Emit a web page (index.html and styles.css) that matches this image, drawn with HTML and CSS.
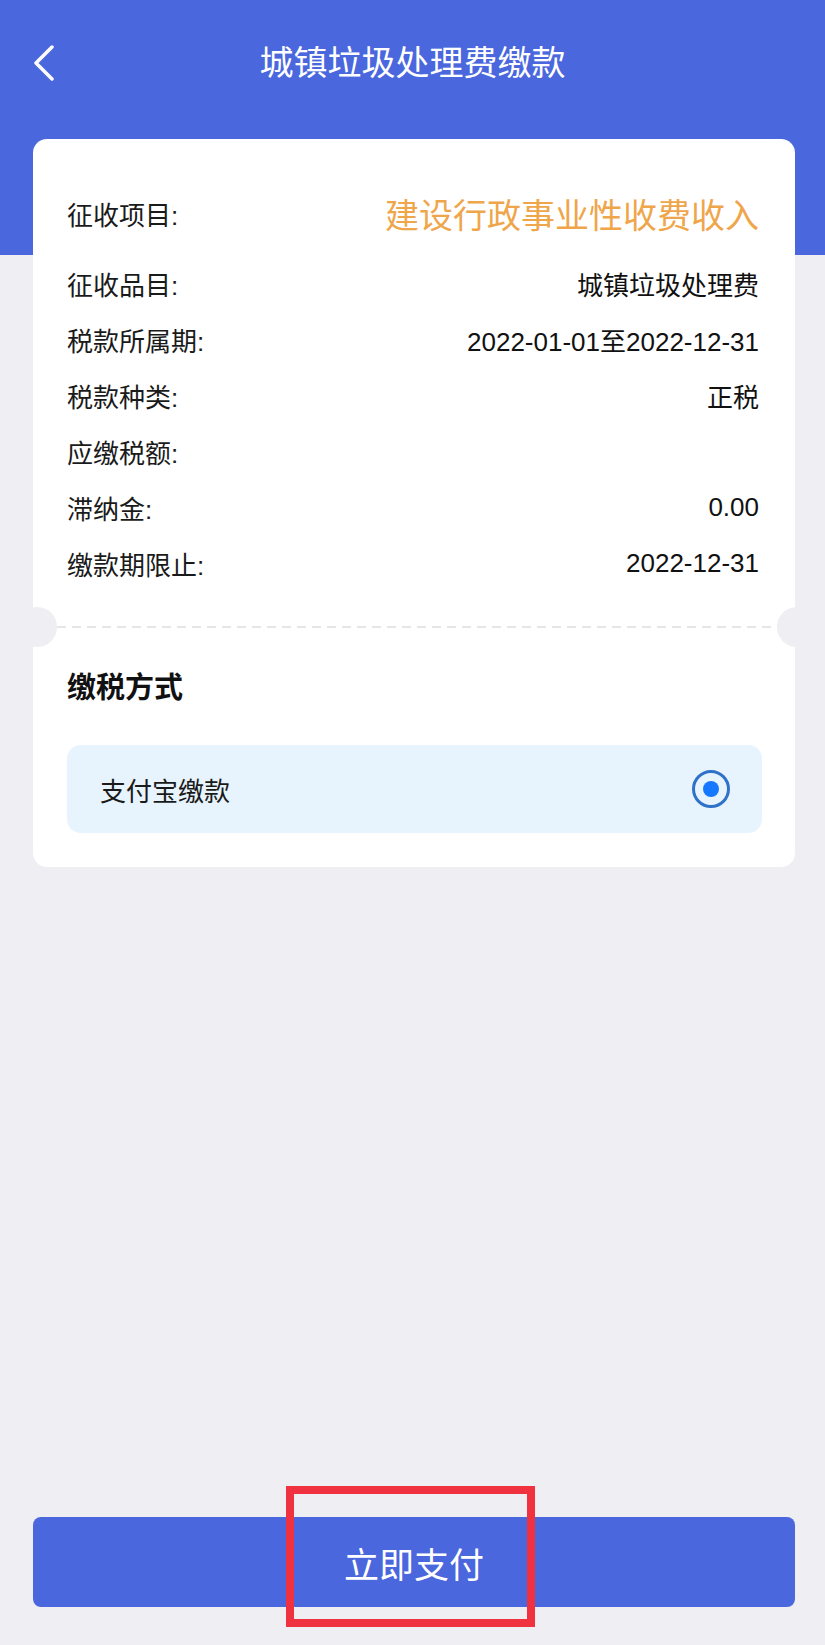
FILE: index.html
```html
<!DOCTYPE html>
<html lang="zh-CN">
<head>
    <meta charset="UTF-8">
    <meta name="viewport" content="width=device-width, initial-scale=1.0">
    <title>城镇垃圾处理费缴款</title>
    <link rel="stylesheet" href="styles.css">
</head>
<body>
<div class="page">

    <div class="nav">
        <a class="back" href="#">
            <svg width="22" height="36" viewBox="0 0 22 36">
                <polyline points="19,2 3,18 19,34" fill="none" stroke="#fff" stroke-width="3.5" stroke-linecap="round" stroke-linejoin="round"/>
            </svg>
        </a>
        <div class="nav-title">城镇垃圾处理费缴款</div>
        <div></div>
    </div>

    <div class="card">
        <div class="info">
            <div class="row row-main">
                <span class="label">征收项目:</span>
                <span class="value highlight-value">建设行政事业性收费收入</span>
            </div>
            <div class="row">
                <span class="label">征收品目:</span>
                <span class="value">城镇垃圾处理费</span>
            </div>
            <div class="row">
                <span class="label">税款所属期:</span>
                <span class="value">2022-01-01至2022-12-31</span>
            </div>
            <div class="row">
                <span class="label">税款种类:</span>
                <span class="value">正税</span>
            </div>
            <div class="row">
                <span class="label">应缴税额:</span>
                <span class="value"></span>
            </div>
            <div class="row">
                <span class="label">滞纳金:</span>
                <span class="value">0.00</span>
            </div>
            <div class="row">
                <span class="label">缴款期限止:</span>
                <span class="value">2022-12-31</span>
            </div>
        </div>

        <div class="divider"></div>

        <div class="pay">
            <div class="pay-title">缴税方式</div>
            <label class="option">
                <span>支付宝缴款</span>
                <span class="radio"><span class="radio-dot"></span></span>
            </label>
        </div>
    </div>

    <div class="footer">
        <button class="pay-btn" type="button">立即支付</button>
        <div class="mark"></div>
    </div>

</div>
</body>
</html>
```

FILE: styles.css
```css
body {
    margin: 0;
    background-color: #eeeef3;
    font-family: "Liberation Sans", "Noto Sans CJK SC", sans-serif;
    color: #111;
}
.page {
    min-height: 100vh;
    display: flex;
    flex-direction: column;
    background: linear-gradient(#4a67dd 0, #4a67dd 255px, #eeeef3 255px);
}

/* top bar */
.nav {
    height: 126px;
    display: grid;
    grid-template-columns: 1fr auto 1fr;
    align-items: center;
}
.back {
    display: flex;
    margin-left: 33px;
}
.nav-title {
    color: #fff;
    font-size: 34px;
    line-height: 40px;
}

/* card */
.card {
    margin: 13px 30px 0 33px;
    background: #fff;
    border-radius: 14px;
}
.info {
    padding: 46px 36px 35px 34px;
}
.row {
    display: flex;
    justify-content: space-between;
    align-items: center;
    height: 56px;
    font-size: 26px;
}
.row-main {
    margin-bottom: 14px;
}
.label {
    color: #1a1a1a;
}
.highlight-value {
    color: #efa64b;
    font-size: 34px;
}

.divider {
    position: relative;
    height: 2px;
    margin: 0 24px;
    background-image: linear-gradient(to right, #e6e6e9 60%, transparent 0);
    background-size: 15px 2px;
}
.divider::before,
.divider::after {
    content: "";
    position: absolute;
    top: -19px;
    width: 40px;
    height: 40px;
    border-radius: 50%;
    background: #eeeef3;
}
.divider::before {
    left: -40px;
}
.divider::after {
    right: -46px;
}

.pay {
    padding: 40px 33px 34px 34px;
}
.pay-title {
    font-size: 29px;
    font-weight: bold;
    line-height: 40px;
    margin-bottom: 37px;
}
.option {
    display: flex;
    align-items: center;
    justify-content: space-between;
    height: 88px;
    padding: 0 32px 0 33px;
    background: #e7f3fd;
    border-radius: 14px;
    font-size: 26px;
    color: #1a1a1a;
}
.radio {
    width: 38px;
    height: 38px;
    box-sizing: border-box;
    border: 3px solid #2f72c8;
    border-radius: 50%;
    display: flex;
    align-items: center;
    justify-content: center;
}
.radio-dot {
    width: 16px;
    height: 16px;
    border-radius: 50%;
    background: #1677ff;
}

/* bottom button */
.footer {
    position: relative;
    margin: auto 30px 38px 33px;
}
.pay-btn {
    display: block;
    width: 100%;
    height: 90px;
    border: none;
    border-radius: 8px;
    background: #4a67dd;
    color: #fff;
    font-family: inherit;
    font-size: 35px;
    cursor: pointer;
}
.mark {
    position: absolute;
    left: 253px;
    top: -31px;
    width: 249px;
    height: 141px;
    box-sizing: border-box;
    border: 8px solid #f0313f;
}
```
